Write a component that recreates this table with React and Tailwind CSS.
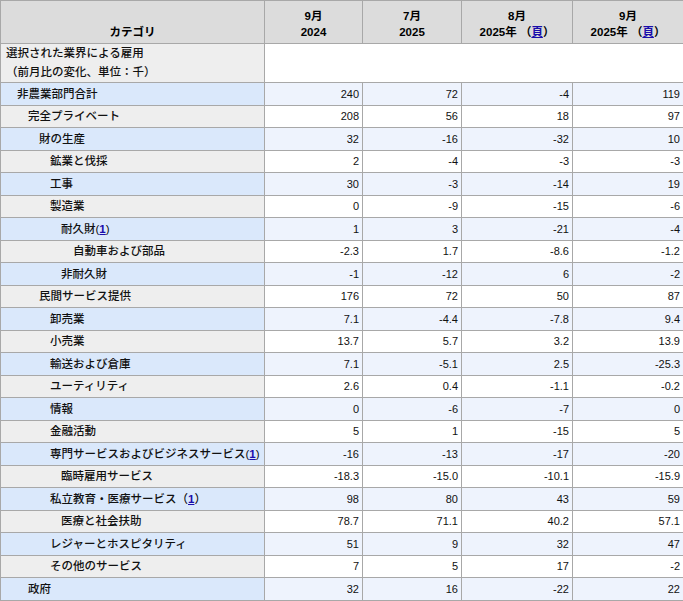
const rows = [
  { label: '非農業部門合計', lvl: 1, v: ['240', '72', '-4', '119'] },
  { label: '完全プライベート', lvl: 2, v: ['208', '56', '18', '97'] },
  { label: '財の生産', lvl: 3, v: ['32', '-16', '-32', '10'] },
  { label: '鉱業と伐採', lvl: 4, v: ['2', '-4', '-3', '-3'] },
  { label: '工事', lvl: 4, v: ['30', '-3', '-14', '19'] },
  { label: '製造業', lvl: 4, v: ['0', '-9', '-15', '-6'] },
  { label: '耐久財', lvl: 5, note: 'half', v: ['1', '3', '-21', '-4'] },
  { label: '自動車および部品', lvl: 6, v: ['-2.3', '1.7', '-8.6', '-1.2'] },
  { label: '非耐久財', lvl: 5, v: ['-1', '-12', '6', '-2'] },
  { label: '民間サービス提供', lvl: 3, v: ['176', '72', '50', '87'] },
  { label: '卸売業', lvl: 4, v: ['7.1', '-4.4', '-7.8', '9.4'] },
  { label: '小売業', lvl: 4, v: ['13.7', '5.7', '3.2', '13.9'] },
  { label: '輸送および倉庫', lvl: 4, v: ['7.1', '-5.1', '2.5', '-25.3'] },
  { label: 'ユーティリティ', lvl: 4, v: ['2.6', '0.4', '-1.1', '-0.2'] },
  { label: '情報', lvl: 4, v: ['0', '-6', '-7', '0'] },
  { label: '金融活動', lvl: 4, v: ['5', '1', '-15', '5'] },
  { label: '専門サービスおよびビジネスサービス', lvl: 4, note: 'half', v: ['-16', '-13', '-17', '-20'] },
  { label: '臨時雇用サービス', lvl: 5, v: ['-18.3', '-15.0', '-10.1', '-15.9'] },
  { label: '私立教育・医療サービス', lvl: 4, note: 'full', v: ['98', '80', '43', '59'] },
  { label: '医療と社会扶助', lvl: 5, v: ['78.7', '71.1', '40.2', '57.1'] },
  { label: 'レジャーとホスピタリティ', lvl: 4, v: ['51', '9', '32', '47'] },
  { label: 'その他のサービス', lvl: 4, v: ['7', '5', '17', '-2'] },
  { label: '政府', lvl: 2, v: ['32', '16', '-22', '22'] },
];

const indent = ['pl-[5px]', 'pl-[16px]', 'pl-[27px]', 'pl-[38px]', 'pl-[49px]', 'pl-[60px]', 'pl-[72px]'];

function Ref() {
  return <a className="text-[#1a0dab] underline font-bold">1</a>;
}

function Page() {
  return <a className="text-[#1a0dab] underline">頁</a>;
}

export default function App() {
  return (
    <div className="bg-white w-[683px] h-[601px] overflow-hidden font-['Liberation_Sans','Noto_Sans_CJK_JP',sans-serif] text-[#111]">
      <table className="border-collapse table-fixed w-[683px] text-[11.5px] leading-[16px]">
        <colgroup>
          <col className="w-[264px]" />
          <col className="w-[98px]" />
          <col className="w-[99px]" />
          <col className="w-[111px]" />
          <col className="w-[111px]" />
        </colgroup>
        <thead>
          <tr className="h-[43px] bg-[#dcdcdc] text-black">
            <th className="border border-[#a8a8a8] align-bottom pb-[3px] font-bold">カテゴリ</th>
            <th className="border border-[#a8a8a8] align-bottom pb-[3px] font-bold">9月<br />2024</th>
            <th className="border border-[#a8a8a8] align-bottom pb-[3px] font-bold">7月<br />2025</th>
            <th className="border border-[#a8a8a8] align-bottom pb-[3px] font-bold">8月<br />2025年 （<Page />）</th>
            <th className="border border-[#a8a8a8] align-bottom pb-[3px] font-bold">9月<br />2025年 （<Page />）</th>
          </tr>
        </thead>
        <tbody>
          <tr className="h-[39px]">
            <td className="border border-[#a8a8a8] bg-[#eeeeee] pl-[5px] font-medium leading-[19px]">
              選択された業界による雇用<br />（前月比の変化、単位：千）
            </td>
            <td colSpan={4} className="border border-[#a8a8a8] bg-white" />
          </tr>
          {rows.map((r, i) => {
            const blue = i % 2 === 0;
            return (
              <tr key={i} className="h-[22.5px]">
                <td className={`border border-[#a8a8a8] font-medium whitespace-nowrap ${indent[r.lvl]} ${blue ? 'bg-[#dae8fb]' : 'bg-[#eeeeee]'}`}>
                  {r.label}
                  {r.note === 'half' && <>(<Ref />)</>}
                  {r.note === 'full' && <>（<Ref />）</>}
                </td>
                {r.v.map((v, j) => (
                  <td key={j} className={`border border-[#a8a8a8] text-right pr-[3px] text-[11px] ${blue ? 'bg-[#eef3fd]' : 'bg-white'}`}>
                    {v}
                  </td>
                ))}
              </tr>
            );
          })}
          <tr className="h-[22px]">
            <td className="border border-[#a8a8a8] bg-[#eeeeee]" />
            <td className="border border-[#a8a8a8]" />
            <td className="border border-[#a8a8a8]" />
            <td className="border border-[#a8a8a8]" />
            <td className="border border-[#a8a8a8]" />
          </tr>
        </tbody>
      </table>
    </div>
  );
}
